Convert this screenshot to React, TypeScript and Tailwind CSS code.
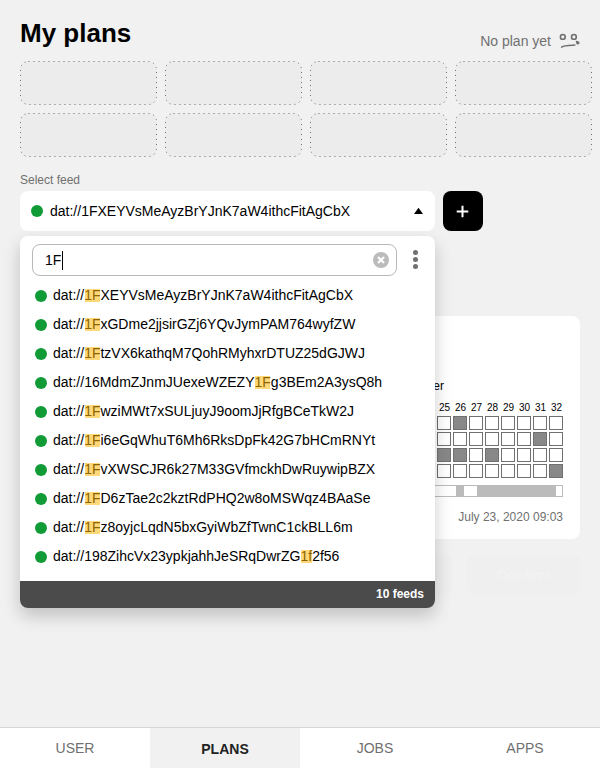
import { Fragment } from "react";

const feeds: [string, string, string][] = [
  ["dat://", "1F", "XEYVsMeAyzBrYJnK7aW4ithcFitAgCbX"],
  ["dat://", "1F", "xGDme2jjsirGZj6YQvJymPAM764wyfZW"],
  ["dat://", "1F", "tzVX6kathqM7QohRMyhxrDTUZ25dGJWJ"],
  ["dat://16MdmZJnmJUexeWZEZY", "1F", "g3BEm2A3ysQ8h"],
  ["dat://", "1F", "wziMWt7xSULjuyJ9oomJjRfgBCeTkW2J"],
  ["dat://", "1F", "i6eGqWhuT6Mh6RksDpFk42G7bHCmRNYt"],
  ["dat://", "1F", "vXWSCJR6k27M33GVfmckhDwRuywipBZX"],
  ["dat://", "1F", "D6zTae2c2kztRdPHQ2w8oMSWqz4BAaSe"],
  ["dat://", "1F", "z8oyjcLqdN5bxGyiWbZfTwnC1ckBLL6m"],
  ["dat://198ZihcVx23ypkjahhJeSRqDwrZG", "1f", "2f56"],
];

// Chunk columns filled in each row of the card
const filled = [[26], [31], [25, 26, 28], [32]];
const columns = [25, 26, 27, 28, 29, 30, 31, 32];
const slots = [1, 2, 3, 4, 5, 6, 7, 8];

function EmptySlot() {
  return (
    <div className="h-11 w-[137px] rounded-lg bg-[#ececec]">
      <svg width="137" height="44" className="block" fill="none" stroke="#707070">
        <rect x="0.5" y="0.5" width="136" height="43" rx="8" strokeDasharray="1 4" />
      </svg>
    </div>
  );
}

function SadFace() {
  return (
    <svg width="22" height="16" viewBox="0 0 22 16" fill="none" stroke="#707070" strokeWidth="1.6">
      <circle cx="3.8" cy="3.9" r="2.4" />
      <circle cx="14.9" cy="3.9" r="2.4" />
      <path d="M2.6 14.1C5 12.2 9 12.3 15.9 12.1" strokeLinecap="round" strokeWidth="1.5" />
      <path d="M16.6 7.7C19 7.6 20.9 8.8 20.5 10.3C20.1 11.8 17.8 11.9 17.3 10.4Z" fill="#707070" stroke="none" />
    </svg>
  );
}

function FeedPanel() {
  return (
    <div className="absolute left-0 top-[45px] z-10 flex h-[372px] w-[415px] flex-col overflow-hidden rounded-lg bg-white shadow-[0_8px_17px_rgba(0,0,0,0.2)]">
      <div className="flex items-center pt-2 pl-3">
        <div className="flex h-8 w-[365px] items-center rounded-lg border border-[#b8b8b8] pr-[7px] pl-3">
          <span className="text-sm">1F</span>
          <span className="ml-[0.6px] h-[19px] w-px bg-black" />
          <svg width="16" height="16" viewBox="0 0 16 16" className="ml-auto">
            <circle cx="8" cy="8" r="8" fill="#bbbbbb" />
            <path d="M5 5L11 11M11 5L5 11" stroke="white" strokeWidth="2.3" />
          </svg>
        </div>
        <svg width="6" height="20" viewBox="0 0 6 20" fill="#707070" className="-mt-px ml-[15px]">
          <circle cx="3.5" cy="2.5" r="2.5" />
          <circle cx="3.5" cy="9.5" r="2.5" />
          <circle cx="3.5" cy="16.5" r="2.5" />
        </svg>
      </div>
      <ul className="flex grow flex-col pt-[5px] pl-[15px]">
        {feeds.map(([before, match, after]) => (
          <li key={before + match + after} className="flex h-[29px] items-center gap-1.5 text-sm">
            <span className="mt-px size-3 rounded-full bg-[#109b36]" />
            <span className="-mt-px whitespace-pre">
              {before}
              <mark className="bg-[linear-gradient(#ffd87a,#ffd87a)] bg-[length:calc(100%-0.6px)_13px] bg-[position:100%_2px] bg-no-repeat bg-transparent text-[#8c6500]">
                {match}
              </mark>
              {after}
            </span>
          </li>
        ))}
      </ul>
      <div className="flex h-[27px] shrink-0 items-center justify-end bg-[#4b4b4b] pr-[11px] pb-0.5 text-xs font-bold text-white">
        10 feeds
      </div>
    </div>
  );
}

function PlanCard() {
  return (
    <section className="mt-[85px] flex h-[223px] w-[560px] flex-col rounded-lg bg-white pr-[17px] pl-[33px]">
      <div className="flex h-[78px] items-end justify-end pr-[119px] text-xs">er</div>
      <div className="mt-2 grid grid-cols-[repeat(8,14px)] justify-end gap-x-0.5 text-center text-[10px] leading-3">
        {columns.map((n) => (
          <span key={n} className="translate-x-[0.5px]">{n}</span>
        ))}
      </div>
      <div className="mt-0.5 grid grid-cols-[repeat(8,14px)] justify-end gap-0.5">
        {filled.map((row, r) => (
          <Fragment key={r}>
            {columns.map((n) => (
              <span
                key={n}
                className={
                  row.includes(n)
                    ? "size-3.5 border border-[#707070] bg-[#888888]"
                    : "size-3.5 border border-[#707070] bg-white"
                }
              />
            ))}
          </Fragment>
        ))}
      </div>
      <div className="mt-[7px] flex h-3 justify-end border border-[#bbbbbb] pr-1.5">
        <span className="w-2 bg-[#bbbbbb]" />
        <span className="w-[13px]" />
        <span className="w-[79px] bg-[#bbbbbb]" />
      </div>
      <div className="mt-3 text-right text-xs text-[#707070]">July 23, 2020 09:03</div>
    </section>
  );
}

export default function App() {
  return (
    <div className="flex h-[768px] w-[600px] flex-col overflow-hidden bg-[#f1f1f1] font-['Liberation_Sans',Arial,sans-serif] text-black">
      <main className="grow pt-[18px] pl-5">
        <header className="flex h-[31px] justify-between pr-[19px]">
          <h1 className="text-[26px] leading-[30px] font-bold">My plans</h1>
          <div className="flex h-5 gap-2 pt-[13px] text-sm text-[#707070]">
            No plan yet
            <div className="pt-0.5">
              <SadFace />
            </div>
          </div>
        </header>
        <div className="mt-3 grid grid-cols-[repeat(4,137px)] gap-2">
          {slots.map((n) => (
            <EmptySlot key={n} />
          ))}
        </div>
        <div className="mt-[15px] h-[19px] text-xs text-[#707070]">Select feed</div>
        <div className="relative flex gap-2">
          <div className="flex h-10 w-[415px] items-center rounded-lg bg-white pr-[11px] pl-[11px] text-sm">
            <span className="mr-[7px] size-3 rounded-full bg-[#109b36]" />
            dat://1FXEYVsMeAyzBrYJnK7aW4ithcFitAgCbX
            <svg width="10" height="8" viewBox="0 0 10 8" className="ml-auto">
              <path d="M0 7L4.5 0.8L9 7Z" />
            </svg>
          </div>
          <button className="flex size-10 items-center justify-center rounded-lg bg-black pr-px">
            <svg width="13" height="13" viewBox="0 0 13 13" stroke="white" strokeWidth="2">
              <path d="M6.5 0.7V12.3M0.7 6.5H12.3" />
            </svg>
          </button>
          <FeedPanel />
        </div>
        <PlanCard />
        <div className="mt-4 flex justify-end gap-[15px] pr-5">
          <button className="h-10 w-[113px] rounded-lg bg-[#efefef]" />
          <button className="h-10 w-[113px] rounded-lg bg-[#efefef] text-sm font-bold text-[#f2f2f2]">Confirm</button>
        </div>
      </main>
      <nav className="grid h-[41px] shrink-0 grid-cols-4 border-t border-[#d6d6d6] bg-white text-center text-sm leading-10 text-[#707070]">
        <span>USER</span>
        <span className="bg-[#f1f1f1] pt-0.5 font-bold leading-[38px] text-[#222222]">PLANS</span>
        <span>JOBS</span>
        <span>APPS</span>
      </nav>
    </div>
  );
}
